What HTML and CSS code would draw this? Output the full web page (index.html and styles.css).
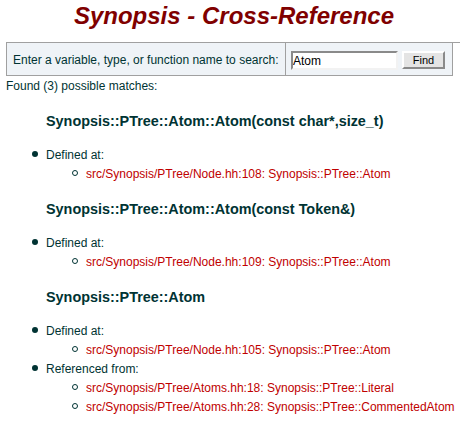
FILE: index.html
```html
<!DOCTYPE html>
<html>
<head>
<meta charset="utf-8">
<title>Synopsis - Cross-Reference</title>
<link rel="stylesheet" href="styles.css">
</head>
<body>
<h1 class="title">Synopsis - Cross-Reference</h1>
<form class="search">
  <div class="search-row">
    <div class="search-label">Enter a variable, type, or function name to search:</div>
    <div class="search-controls">
      <input class="search-input" type="text" value="Atom">
      <button class="search-button" type="button">Find</button>
    </div>
  </div>
</form>
<p class="found">Found (3) possible matches:</p>

<h2 class="match">Synopsis::PTree::Atom::Atom(const char*,size_t)</h2>
<ul class="list">
  <li>Defined at:
    <ul class="sublist">
      <li><a href="#">src/Synopsis/PTree/Node.hh:108: Synopsis::PTree::Atom</a></li>
    </ul>
  </li>
</ul>

<h2 class="match">Synopsis::PTree::Atom::Atom(const Token&amp;)</h2>
<ul class="list">
  <li>Defined at:
    <ul class="sublist">
      <li><a href="#">src/Synopsis/PTree/Node.hh:109: Synopsis::PTree::Atom</a></li>
    </ul>
  </li>
</ul>

<h2 class="match">Synopsis::PTree::Atom</h2>
<ul class="list">
  <li>Defined at:
    <ul class="sublist">
      <li><a href="#">src/Synopsis/PTree/Node.hh:105: Synopsis::PTree::Atom</a></li>
    </ul>
  </li>
  <li>Referenced from:
    <ul class="sublist">
      <li><a href="#">src/Synopsis/PTree/Atoms.hh:18: Synopsis::PTree::Literal</a></li>
      <li><a href="#">src/Synopsis/PTree/Atoms.hh:28: Synopsis::PTree::CommentedAtom</a></li>
    </ul>
  </li>
</ul>
</body>
</html>
```
FILE: styles.css
```css
html, body {
  background: #ffffff;
}
body {
  margin: 0;
  padding: 0 6px;
  font-family: "Liberation Sans", Arial, sans-serif;
  font-size: 12px;
  line-height: 14px;
  color: #033;
}
.title {
  margin: 2px 0 0;
  font-size: 24px;
  line-height: 28px;
  font-weight: bold;
  font-style: italic;
  text-align: center;
  color: #800000;
}
.search {
  margin: 12px 0 0;
  width: 454px;
  border-top: 1px solid #a0a0a0;
}
.search-row {
  display: flex;
  width: 445px;
  border: 1px solid #a0a0a0;
  border-top: none;
  background: #eff3f7;
}
.search-label {
  width: 278px;
  height: 32px;
  box-sizing: border-box;
  padding: 10px 0 0 6px;
  white-space: nowrap;
}
.search-controls {
  display: flex;
  align-items: flex-start;
  gap: 4px;
  width: 166px;
  height: 32px;
  box-sizing: border-box;
  border-left: 1px solid #a0a0a0;
  padding: 8px 0 0 5px;
}
.search-input {
  width: 107px;
  height: 19px;
  box-sizing: border-box;
  margin: 0;
  padding: 0;
  border-width: 2px;
  border-style: solid;
  border-color: #8a8a8a #f2f2f2 #f2f2f2 #8a8a8a;
  background: #ffffff;
  font-family: "Liberation Sans", Arial, sans-serif;
  font-size: 12px;
  color: #000;
  outline: none;
}
.search-button {
  width: 43px;
  height: 18px;
  box-sizing: border-box;
  margin: 0;
  padding: 0;
  border-width: 2px;
  border-style: solid;
  border-color: #ffffff #8a8a8a #8a8a8a #ffffff;
  background: #e4e4e4;
  font-family: "Liberation Sans", Arial, sans-serif;
  font-size: 11px;
  line-height: 14px;
  color: #000;
}
.found {
  margin: 3px 0 20px;
}
.match {
  margin: 17px 0 16px 40px;
  font-size: 14.4px;
  line-height: 17px;
  font-weight: bold;
  color: #033;
}
.list, .sublist {
  list-style: none;
  margin: 0;
  padding: 0 0 0 40px;
}
.list li, .sublist li {
  line-height: 19px;
}
.list > li::before {
  content: "";
  display: inline-block;
  width: 6px;
  height: 6px;
  margin-left: -14px;
  margin-right: 8px;
  border-radius: 50%;
  background: #033;
  vertical-align: 2px;
}
.sublist > li::before {
  content: "";
  display: inline-block;
  width: 6px;
  height: 6px;
  box-sizing: border-box;
  margin-left: -14px;
  margin-right: 8px;
  border-radius: 50%;
  border: 1px solid #033;
  background: transparent;
  vertical-align: 2px;
}
.sublist a {
  color: #c00000;
  text-decoration: none;
}
```
